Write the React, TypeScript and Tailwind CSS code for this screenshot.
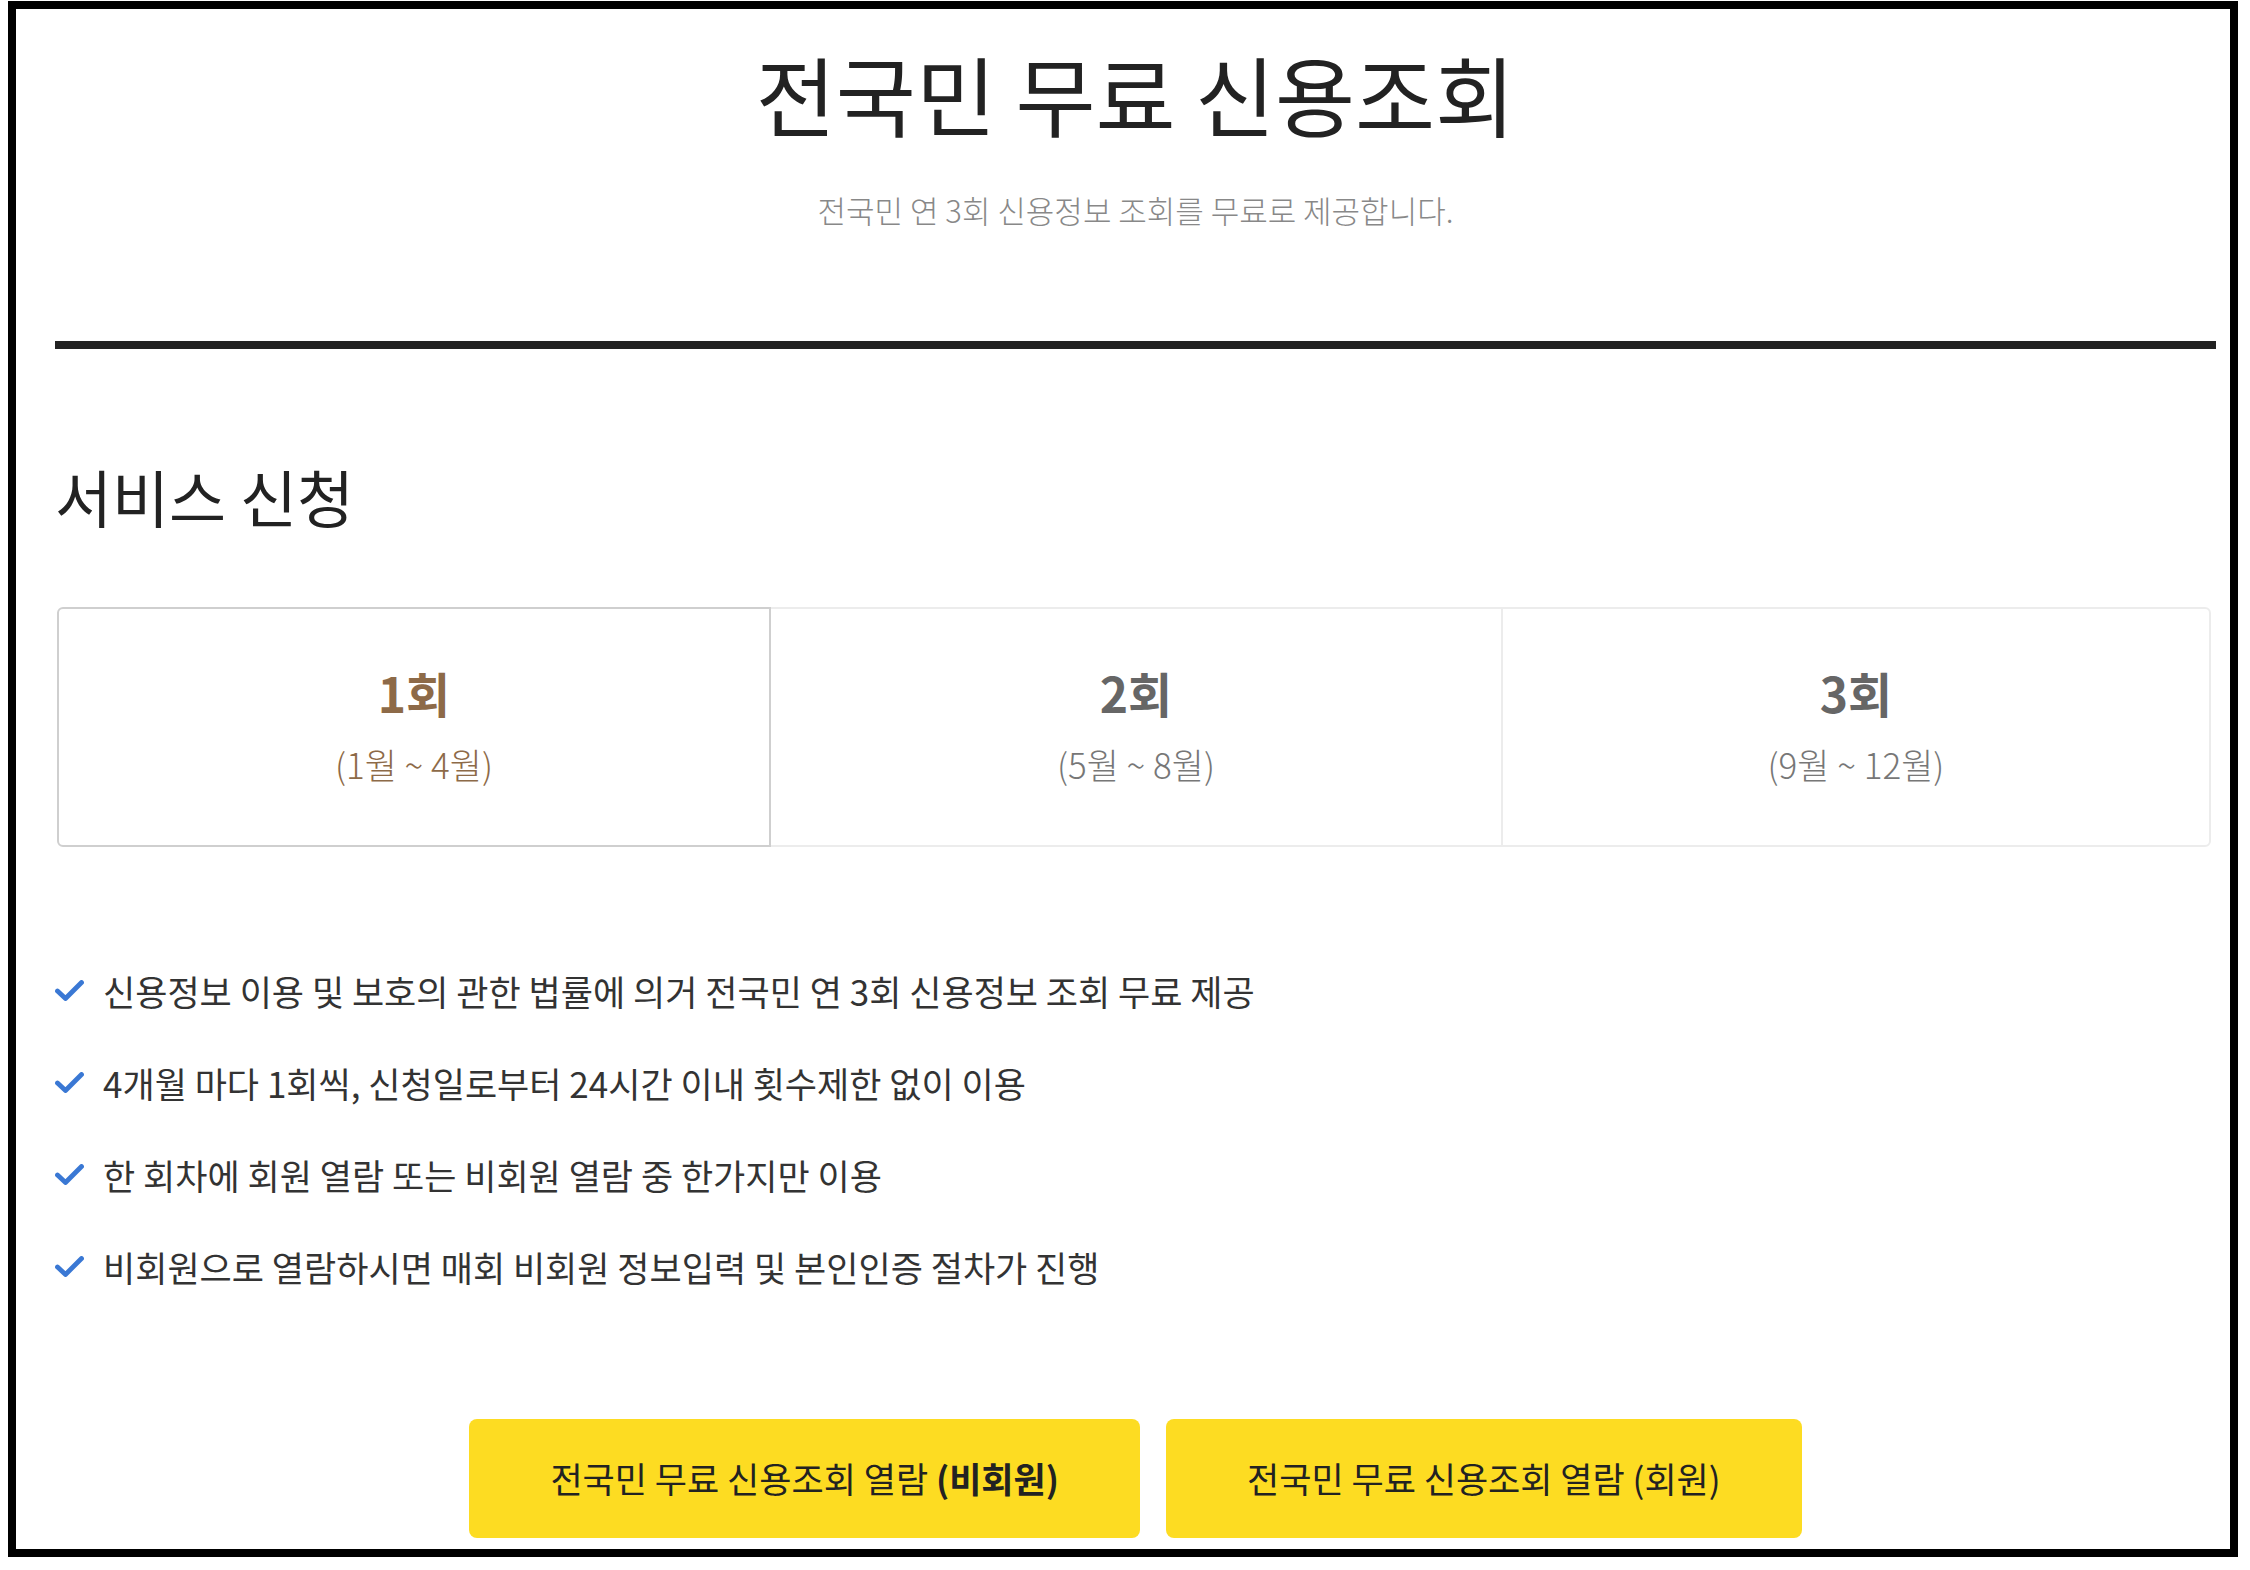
const notes = [
  '신용정보 이용 및 보호의 관한 법률에 의거 전국민 연 3회 신용정보 조회 무료 제공',
  '4개월 마다 1회씩, 신청일로부터 24시간 이내 횟수제한 없이 이용',
  '한 회차에 회원 열람 또는 비회원 열람 중 한가지만 이용',
  '비회원으로 열람하시면 매회 비회원 정보입력 및 본인인증 절차가 진행',
];

function Check() {
  return (
    <svg width="29" height="21" viewBox="0 0 29 21" className="shrink-0">
      <path d="M2.5 11 L10.5 18.5 L26.5 2.5" fill="none" stroke="#3a78d4" strokeWidth="4.8" strokeLinecap="round" strokeLinejoin="round" />
    </svg>
  );
}

export default function App() {
  return (
    <div className="min-h-screen bg-white pt-px pl-2">
      <div
        className="flex h-[1556px] w-[2230px] flex-col border-8 border-black pl-[39px] pr-[14px]"
        style={{ fontFamily: '"Noto Sans CJK KR", "Noto Sans", sans-serif' }}
      >
        {/* Header */}
        <h1 className="mt-[41px] text-center text-[87px] leading-none font-normal text-[#222]">전국민 무료 신용조회</h1>
        <p className="mt-[57px] text-center text-[31px] leading-none font-light text-[#888]">
          전국민 연 3회 신용정보 조회를 무료로 제공합니다.
        </p>
        <div className="mt-[116px] h-2 bg-[#222]" />

        {/* Service */}
        <h2 className="mt-[116px] text-[62px] leading-none font-normal text-[#222]">서비스 신청</h2>

        <div className="mt-[80px] ml-[2px] mr-[5px] grid h-[240px] grid-cols-[714px_730px_1fr]">
          <div className="flex flex-col items-center justify-center rounded-l-md border-2 border-[#cfcfcf] pb-[6px] text-[#8d6a48]">
            <span className="text-[48px] leading-none font-bold">1회</span>
            <span className="mt-[30px] text-[35px] leading-none font-light">(1월 ~ 4월)</span>
          </div>
          <div className="flex flex-col items-center justify-center border-y-2 border-[#ececec] pb-[6px] text-[#666]">
            <span className="text-[48px] leading-none font-bold">2회</span>
            <span className="mt-[30px] text-[35px] leading-none font-light text-[#777]">(5월 ~ 8월)</span>
          </div>
          <div className="flex flex-col items-center justify-center rounded-r-md border-2 border-[#ececec] pb-[6px] text-[#666]">
            <span className="text-[48px] leading-none font-bold">3회</span>
            <span className="mt-[30px] text-[35px] leading-none font-light text-[#777]">(9월 ~ 12월)</span>
          </div>
        </div>

        {/* Notes */}
        <ul className="mt-[126px] flex flex-col gap-[57px]">
          {notes.map((n) => (
            <li key={n} className="flex items-center gap-[19px] text-[35px] leading-none text-[#333]">
              <Check />
              <span>{n}</span>
            </li>
          ))}
        </ul>

        {/* Buttons */}
        <div className="mt-[135px] flex justify-center gap-[26px]">
          <button className="h-[119px] rounded-lg bg-[#fddc22] px-[81px] text-[35px] text-[#222]">
            전국민 무료 신용조회 열람 <b className="font-bold">(비회원)</b>
          </button>
          <button className="h-[119px] rounded-lg bg-[#fddc22] px-[81px] text-[35px] text-[#222]">
            전국민 무료 신용조회 열람 (회원)
          </button>
        </div>
      </div>
    </div>
  );
}
